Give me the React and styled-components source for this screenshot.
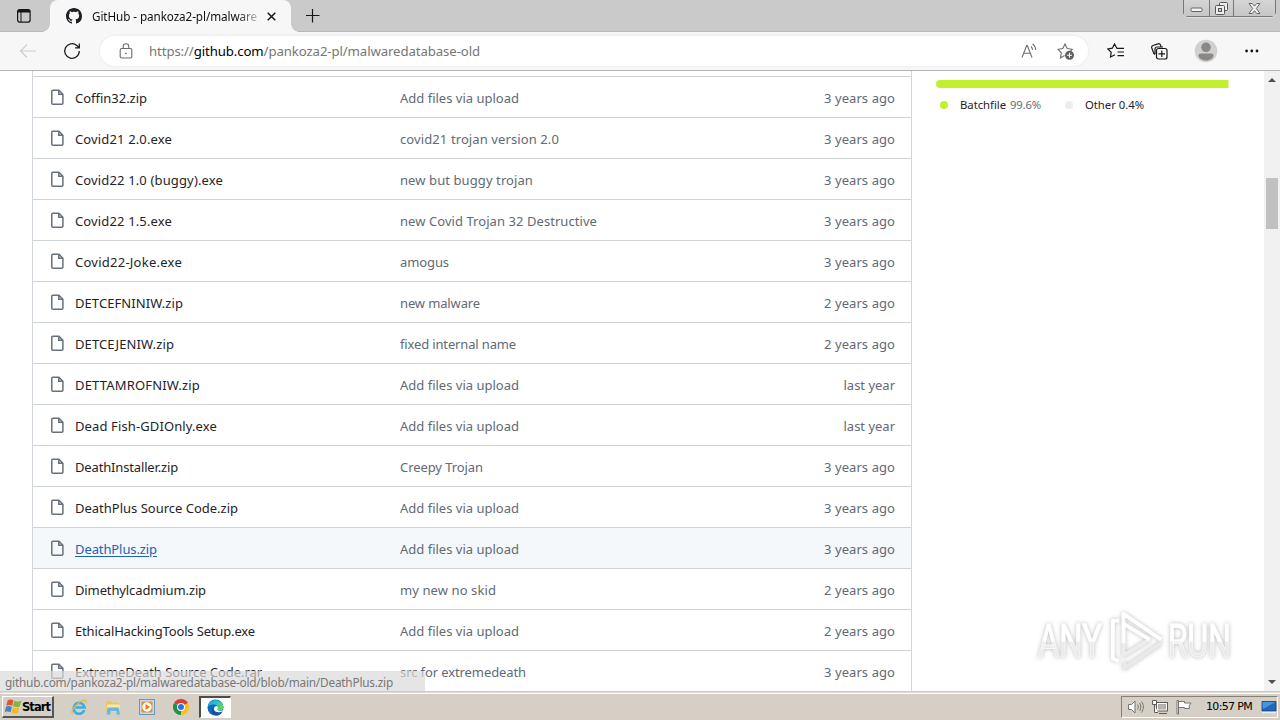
import React, { useLayoutEffect, useRef, useState } from 'react';
import styled, { createGlobalStyle } from 'styled-components';

const GlobalStyle = createGlobalStyle`
  * { box-sizing: border-box; }
  body {
    margin: 0;
    overflow: hidden;
    background: #fff;
    font-family: "Noto Sans", "Open Sans", sans-serif;
  }
  svg { display: block; flex: none; }
`;

const Screen = styled.div`
  position: relative;
  display: flex;
  flex-direction: column;
  width: 1280px;
  height: 720px;
  overflow: hidden;
`;

/* ---------- text ---------- */

const FitBox = styled.span`
  display: block;
  flex: none;
  width: ${p => p.$w}px;
  white-space: pre;
`;
const FitInner = styled.span`
  display: inline-block;
  text-decoration: inherit;
`;

// spreads the letters so that the string takes exactly w pixels
const Fit = ({ w, children, className }) => {
  const ref = useRef(null);
  const [spacing, setSpacing] = useState(0);
  useLayoutEffect(() => {
    const natural = ref.current.getBoundingClientRect().width;
    setSpacing((w - natural) / ref.current.textContent.length);
  }, []);
  return (
    <FitBox $w={w} className={className}>
      <FitInner ref={ref} style={{ letterSpacing: spacing }}>{children}</FitInner>
    </FitBox>
  );
};

/* ---------- browser chrome ---------- */

const TabStrip = styled.div`
  display: flex;
  flex: none;
  height: 32px;
  background: #cacaca;
  box-shadow: inset 0 -1px 0 #b9b9b9;
`;
const TabActions = styled.div`
  width: 50px;
  padding: 8px 0 0 16px;
`;
const Tab = styled.div`
  position: relative;
  display: flex;
  align-items: center;
  width: 241px;
  height: 32px;
  padding-left: 16px;
  border-radius: 8px 8px 0 0;
  background: #f7f7f7;
  &::before, &::after {
    content: '';
    position: absolute;
    bottom: 0;
    width: 8px;
    height: 8px;
  }
  &::before {
    left: -8px;
    background: radial-gradient(circle at 0 0, transparent 7.5px, #f7f7f7 8px);
  }
  &::after {
    right: -8px;
    background: radial-gradient(circle at 100% 0, transparent 7.5px, #f7f7f7 8px);
  }
`;
const TabTitle = styled(Fit)`
  margin: 0 10px 0 10px;
  font-size: 11.7px;
  line-height: 18px;
  color: #111;
  mask-image: linear-gradient(90deg, #000 145px, rgba(0, 0, 0, .3) 164px);
`;
const NewTab = styled.div`
  padding: 9px 0 0 15px;
`;
const WindowButtons = styled.div`
  display: flex;
  width: 93px;
  height: 17px;
  margin: 0 4px 0 auto;
  border: 1px solid #777;
  border-top: 0;
  border-radius: 0 0 5px 5px;
  box-shadow: 0 1px 0 #dedede;
`;
const WindowButton = styled.div`
  display: flex;
  align-items: center;
  justify-content: center;
  width: ${p => p.$w}px;
  background: linear-gradient(#d5d5d5, #c6c6c6);
  & + & { border-left: 1px solid #777; }
`;

const Toolbar = styled.div`
  display: flex;
  flex: none;
  align-items: center;
  height: 39px;
  padding-left: 19px;
  background: #f7f7f7;
  border-bottom: 1px solid #b4b4b4;
`;
const Reload = styled.div`
  margin-left: 26px;
`;
const AddressBar = styled.div`
  display: flex;
  align-items: center;
  width: 988px;
  height: 30px;
  margin-left: 19px;
  padding: 0 13px 0 18px;
  border-radius: 15px;
  background: #fff;
  box-shadow: 0 0 0 1.5px #f1f1f1;
`;
const Url = styled(Fit)`
  margin: 0 auto 0 15px;
  font-size: 13.2px;
  color: #767676;
  b { font-weight: 400; color: #000; }
`;
const ToolIcons = styled.div`
  display: flex;
  align-items: center;
  padding-left: 19px;
`;
const IconSlot = styled.div`
  width: ${p => p.$w}px;
`;
const Avatar = styled.div`
  margin-right: 27px;
`;

/* ---------- page ---------- */

const Page = styled.main`
  position: relative;
  display: flex;
  flex: none;
  height: 620px;
  overflow: hidden;
  background: #fff;
`;
const FileTable = styled.div`
  width: 880px;
  margin-left: 32px;
  padding-top: 5px;
  border: solid #d0d5da;
  border-width: 0 1px;
`;
const FileRow = styled.div`
  display: flex;
  align-items: center;
  height: 41px;
  padding: 1px 16px 0 16px;
  border-top: 1px solid #d0d3d6;
  background: ${p => (p.$hover ? '#f5f8fb' : '#fff')};
  font-size: 13px;
  line-height: 20px;
`;
const FileIcon = styled.svg`
  margin: -1px 9px 0 0;
`;
const NameCell = styled.div`
  width: 325px;
  color: ${p => (p.$hover ? '#1b62b5' : '#1f2328')};
  span { text-decoration: ${p => (p.$hover ? 'underline' : 'none')}; }
  text-underline-offset: 2px;
`;
const MessageCell = styled.div`
  flex: 1;
  color: #626a74;
`;
const AgeCell = styled.div`
  color: #626a74;
`;
const Sidebar = styled.aside`
  width: 293px;
  margin-left: 24px;
  padding-top: 9px;
`;
const LanguageBar = styled.div`
  height: 8px;
  border-radius: 4px 0 0 4px;
  background: #c1f12e;
  border-right: 1px solid #dff5a4;
`;
const Languages = styled.div`
  display: flex;
  align-items: center;
  margin-top: 8px;
  padding-left: 4px;
  font-size: 11.3px;
  line-height: 18px;
  color: #1f2328;
`;
const Dot = styled.i`
  width: 8px;
  height: 8px;
  margin-right: 12px;
  border-radius: 50%;
  background: ${p => p.$color};
`;
const Percent = styled(Fit)`
  margin: 0 24px 0 4px;
  color: #656d76;
`;
const Scrollbar = styled.div`
  display: flex;
  flex-direction: column;
  align-items: center;
  width: 16px;
  margin-left: auto;
  padding: 7px 0;
  background: #f1f1f1;
`;
const Thumb = styled.div`
  width: 12px;
  height: 51px;
  margin: 96px 0 auto;
  background: #c1c1c1;
`;
const StatusBubble = styled.div`
  position: absolute;
  left: 0;
  bottom: 0;
  width: 425px;
  height: 20px;
  padding: 2px 0 0 5px;
  border-radius: 0 3px 0 0;
  background: rgba(218, 218, 218, .7);
  font-size: 11.8px;
  line-height: 18px;
  color: #777;
`;
const Watermark = styled.div`
  position: absolute;
  left: 1038px;
  top: 537px;
  display: flex;
  align-items: center;
  width: 200px;
  height: 66px;
  filter: drop-shadow(0 0 2px rgba(0, 0, 0, .27));
`;
const MarkWord = styled.span`
  width: ${p => p.$w}px;
  white-space: nowrap;
  font: 400 46px/66px Roboto, sans-serif;
  span {
    display: inline-block;
    transform: scaleX(${p => p.$scale});
    transform-origin: 0 50%;
    color: transparent;
    -webkit-text-stroke: 1px rgba(255, 255, 255, .6);
    background: linear-gradient(#fff 50%, #ececec 52%, #e6e6e6);
    background-clip: text;
  }
`;

/* ---------- taskbar ---------- */

const Taskbar = styled.footer`
  display: flex;
  flex: none;
  align-items: flex-start;
  height: 29px;
  padding: 4px 2px 0;
  background: #d5cfc6;
  border-top: 1px solid #cfcac3;
  box-shadow: inset 0 1px 0 #dedad4, inset 0 2px 0 #fdfdfc;
`;
const StartButton = styled.div`
  display: flex;
  align-items: center;
  width: 52px;
  height: 22px;
  padding-left: 2px;
  border: solid;
  border-width: 1px 2px 2px 1px;
  border-color: #fff #555 #555 #fff;
  font: 700 11.5px "DejaVu Sans", sans-serif;
  color: #000;
`;
const StartLabel = styled(Fit)`
  margin-left: 0;
`;
const QuickLaunch = styled.div`
  display: flex;
  align-items: center;
  gap: 18px;
  height: 22px;
  padding: 0 10px 0 17px;
`;
const ActiveTask = styled.div`
  display: flex;
  align-items: center;
  justify-content: center;
  width: 32px;
  height: 22px;
  border: solid;
  border-width: 2px 1px 1px 2px;
  border-color: #4c4c4c #fff #fff #4c4c4c;
  background: #fdfdfc;
`;
const Tray = styled.div`
  display: flex;
  align-items: center;
  width: 157px;
  height: 22px;
  margin-left: auto;
  padding-left: 6px;
  border: 1px solid;
  border-color: #878078 #fff #fff #878078;
`;
const TraySlot = styled.div`
  width: ${p => p.$w}px;
`;
const Clock = styled(Fit)`
  margin: 0 9px 0 5px;
  font: 11px/14px "DejaVu Sans", sans-serif;
  color: #000;
`;

/* ---------- data ---------- */

const upload = ['Add files via upload', 119];
const years3 = ['3 years ago', 71];
const years2 = ['2 years ago', 71];
const lastYear = ['last year', 51.5];

const files = [
  { name: ['Coffin32.zip', 72], message: upload, age: years3 },
  { name: ['Covid21 2.0.exe', 97], message: ['covid21 trojan version 2.0', 159], age: years3 },
  { name: ['Covid22 1.0 (buggy).exe', 148], message: ['new but buggy trojan', 133], age: years3 },
  { name: ['Covid22 1.5.exe', 97], message: ['new Covid Trojan 32 Destructive', 197], age: years3 },
  { name: ['Covid22-Joke.exe', 107], message: ['amogus', 49], age: years3 },
  { name: ['DETCEFNINIW.zip', 108], message: ['new malware', 80], age: years2 },
  { name: ['DETCEJENIW.zip', 99], message: ['fixed internal name', 116], age: years2 },
  { name: ['DETTAMROFNIW.zip', 125], message: upload, age: lastYear },
  { name: ['Dead Fish-GDIOnly.exe', 142], message: upload, age: lastYear },
  { name: ['DeathInstaller.zip', 103], message: ['Creepy Trojan', 83], age: years3 },
  { name: ['DeathPlus Source Code.zip', 163], message: upload, age: years3 },
  { name: ['DeathPlus.zip', 82], message: upload, age: years3, hover: true },
  { name: ['Dimethylcadmium.zip', 131], message: ['my new no skid', 96], age: years2 },
  { name: ['EthicalHackingTools Setup.exe', 180], message: upload, age: years2 },
  { name: ['ExtremeDeath Source Code.rar', 187], message: ['src for extremedeath', 126], age: years3 },
];

/* ---------- icons ---------- */

const GithubMark = () => (
  <svg width="16" height="16" viewBox="0 0 16 16" fill="#1b1f23">
    <path d="M8 0C3.58 0 0 3.58 0 8c0 3.54 2.29 6.53 5.47 7.59.4.07.55-.17.55-.38 0-.19-.01-.82-.01-1.49-2.01.37-2.53-.49-2.69-.94-.09-.23-.48-.94-.82-1.13-.28-.15-.68-.52-.01-.53.63-.01 1.08.58 1.23.82.72 1.21 1.87.87 2.33.66.07-.52.28-.87.51-1.07-1.78-.2-3.64-.89-3.64-3.95 0-.87.31-1.59.82-2.15-.08-.2-.36-1.02.08-2.12 0 0 .67-.21 2.2.82.64-.18 1.32-.27 2-.27s1.36.09 2 .27c1.53-1.04 2.2-.82 2.2-.82.44 1.1.16 1.92.08 2.12.51.56.82 1.27.82 2.15 0 3.07-1.87 3.75-3.65 3.95.29.25.54.73.54 1.48 0 1.07-.01 1.93-.01 2.2 0 .21.15.46.55.38A8.01 8.01 0 0 0 16 8c0-4.42-3.58-8-8-8z" />
  </svg>
);

const DocIcon = () => (
  <FileIcon width="17" height="17" viewBox="0 0 17 17" fill="none" stroke="#68717b" strokeWidth="1.5">
    <path d="M3.8 1.2h6.1l4 4v9.1a1 1 0 0 1-1 1H3.8a1 1 0 0 1-1-1V2.2a1 1 0 0 1 1-1zM9.8 1.4v3.9h4" />
  </FileIcon>
);

const ChromeIcon = () => (
  <svg width="16" height="16" viewBox="0 0 16 16">
    <path d="M8 8 1.07 4A8 8 0 0 1 14.93 4z" fill="#e33b2e" />
    <path d="M8 8 14.93 4A8 8 0 0 1 8 16z" fill="#fbc116" />
    <path d="M8 8v8A8 8 0 0 1 1.07 4z" fill="#229342" />
    <circle cx="8" cy="8" r="4" fill="#fff" />
    <circle cx="8" cy="8" r="3" fill="#2c75e0" />
  </svg>
);

const EdgeIcon = () => (
  <svg width="17" height="17" viewBox="0 0 17 17">
    <defs>
      <linearGradient id="edgeTop" x1="0" y1="0" x2="1" y2=".4">
        <stop offset="0" stopColor="#1fa5df" />
        <stop offset=".55" stopColor="#27bfce" />
        <stop offset="1" stopColor="#62d35a" />
      </linearGradient>
    </defs>
    <circle cx="8.5" cy="8.5" r="8" fill="#1168bd" />
    <path d="M.6 8A8 8 0 0 1 16.5 8c0 2.5-2 3.8-4.3 3.8-1.8 0-2.7-.8-2-1.6 1.2-1.6.2-4.6-3-4.6C3.6 5.6.8 7 .6 8z" fill="url(#edgeTop)" />
    <path d="M5.8 9.2C5.8 13 9 15 15.3 12.9 14 15.3 11.5 16.5 8.8 16.5 5 15.5 3.5 12.5 5.8 9.2z" fill="#14509b" />
    <path d="M8.3 7.4c-1.6.7-1.9 3.6.4 5 2.3 1.3 5 .9 6.9-.2l1.4.6V10.5c-2 1.7-4.6 1.7-6.3.8-.8-.5-.4-1 .1-1.9.5-1.5-.9-2.9-2.5-2z" fill="#fff" />
  </svg>
);

const Word = ({ w, scale, children }) => (
  <MarkWord $w={w} $scale={scale}><span>{children}</span></MarkWord>
);

export default function App() {
  return (
    <Screen>
      <GlobalStyle />
      <TabStrip>
        <TabActions>
          <svg width="16" height="16" viewBox="0 0 16 16" fill="none" stroke="#171717">
            <rect x="1.6" y="1.6" width="12.5" height="12.5" rx="2" strokeWidth="1.2" />
            <path d="M2 3.2h12" strokeWidth="2.6" />
            <path d="M5 4v10" />
          </svg>
        </TabActions>
        <Tab>
          <GithubMark />
          <TabTitle w={165}>GitHub - pankoza2-pl/malware</TabTitle>
          <svg width="9" height="9" viewBox="0 0 9 9" stroke="#171717" strokeWidth="1.5">
            <path d="M.7.7l7.6 7.6M8.3.7.7 8.3" />
          </svg>
        </Tab>
        <NewTab>
          <svg width="14" height="14" viewBox="0 0 14 14" stroke="#171717" strokeWidth="1.2">
            <path d="M6.5 0v13.5M0 6.5h13.5" />
          </svg>
        </NewTab>
        <WindowButtons>
          <WindowButton $w={25}>
            <svg width="13" height="7" viewBox="0 0 13 7"><rect x="1" y="3" width="11" height="3.5" rx="1" fill="#f4f4f4" stroke="#666" /></svg>
          </WindowButton>
          <WindowButton $w={25}>
            <svg width="13" height="13" viewBox="0 0 13 13" fill="#eee" stroke="#555">
              <rect x="4.5" y=".5" width="8" height="8" rx="1" />
              <rect x=".5" y="3.5" width="9" height="9" rx="1" />
              <rect x="3.5" y="6.5" width="3" height="3" fill="#ccc" />
            </svg>
          </WindowButton>
          <WindowButton $w={42}>
            <svg width="13" height="11" viewBox="0 0 13 11" fill="#f4f4f4" stroke="#666">
              <path d="M1 .5h3.2l2.3 2.7L8.8.5H12L8.3 5.5l3.7 5H8.8L6.5 7.7l-2.3 2.8H1l3.7-5z" />
            </svg>
          </WindowButton>
        </WindowButtons>
      </TabStrip>

      <Toolbar>
        <svg width="18" height="16" viewBox="0 0 18 16" fill="none" stroke="#cfcfcf" strokeWidth="1.2">
          <path d="M17 8H2M8 1.5 1.5 8 8 14.5" />
        </svg>
        <Reload>
          <svg width="18" height="18" viewBox="0 0 18 18" fill="none" stroke="#202020" strokeWidth="1.3">
            <path d="M16.3 9A7.3 7.3 0 1 1 13.8 3.5L16 5.4M16.3 1.5v4.3H12" />
          </svg>
        </Reload>
        <AddressBar>
          <svg width="16" height="16" viewBox="0 0 16 16" fill="none" stroke="#6c6c6c" strokeWidth="1.1">
            <rect x="2.2" y="5.5" width="11.6" height="9.5" rx="1.5" />
            <path d="M5.2 5.5V3.6a2.8 2.8 0 0 1 5.6 0v1.9" />
            <circle cx="8" cy="10.3" r=".9" fill="#6c6c6c" stroke="none" />
          </svg>
          <Url w={331}>https://<b>github.com</b>/pankoza2-pl/malwaredatabase-old</Url>
          <IconSlot $w={36}>
            <svg width="17" height="16" viewBox="0 0 17 16" fill="none" stroke="#6c6c6c" strokeWidth="1.1">
              <path d="M1 14.5 5.7 2.5h.6L11 14.5M2.7 10.3h6.6M10 3.5c1 .8 1.5 2 1.5 3.500M11.6 1c2 1.3 3 3.3 3 6" />
            </svg>
          </IconSlot>
          <svg width="18" height="17" viewBox="0 0 18 17" fill="none" stroke="#6c6c6c" strokeWidth="1.1">
            <path d="M7.5 12.5 3.5 15l.8-5.2L1 6.3l4.8-.8L8 1l2.2 4.500 5 .8-2 2" />
            <circle cx="12.5" cy="12.3" r="4.5" fill="#5f5f5f" stroke="none" />
            <path d="M12.5 9.8v5M10 12.3h5" stroke="#fff" />
          </svg>
        </AddressBar>
        <ToolIcons>
          <IconSlot $w={44}>
            <svg width="18" height="16" viewBox="0 0 18 16" fill="none" stroke="#171717" strokeWidth="1.2">
              <path d="M10 5.4 9.8 5 7.5 1 5.3 5.2.9 6l3.3 3.4L3.5 14l4.5-2.3M9.8 5.4H17M10.5 9H17M10.5 12.6H17" />
            </svg>
          </IconSlot>
          <IconSlot $w={43}>
            <svg width="17" height="17" viewBox="0 0 17 17" fill="none" stroke="#171717" strokeWidth="1.2">
              <path d="M4 11.5 2.8 10.5.8 5A2 2 0 0 1 2 2.5L7 .9a2 2 0 0 1 2.5 1l.5 1.6M4 11V6a2 2 0 0 1 2-2h6" />
              <rect x="5.5" y="5.5" width="10.5" height="10.5" rx="2" />
              <path d="M10.8 7.5v6.5M7.5 10.8H14" />
            </svg>
          </IconSlot>
          <Avatar>
            <svg width="24" height="24" viewBox="0 0 24 24">
              <circle cx="12" cy="12" r="11.3" fill="#d2d0ce" />
              <circle cx="12" cy="8.3" r="4.8" fill="#8a8886" />
              <path d="M4.5 16.5c0-1.3 1-2 2.3-2h10.4c1.3 0 2.3.7 2.3 2 0 2.5-3.3 5-7.5 5s-7.5-2.5-7.5-5z" fill="#8a8886" />
            </svg>
          </Avatar>
          <svg width="14" height="4" viewBox="0 0 14 4" fill="#171717">
            <circle cx="1.6" cy="2" r="1.4" /><circle cx="6.8" cy="2" r="1.4" /><circle cx="12" cy="2" r="1.4" />
          </svg>
        </ToolIcons>
      </Toolbar>

      <Page>
        <FileTable>
          {files.map(f => (
            <FileRow key={f.name[0]} $hover={f.hover}>
              <DocIcon />
              <NameCell $hover={f.hover}><Fit w={f.name[1]}>{f.name[0]}</Fit></NameCell>
              <MessageCell><Fit w={f.message[1]}>{f.message[0]}</Fit></MessageCell>
              <AgeCell><Fit w={f.age[1]}>{f.age[0]}</Fit></AgeCell>
            </FileRow>
          ))}
        </FileTable>
        <Sidebar>
          <LanguageBar />
          <Languages>
            <Dot $color="#c1f12e" />
            <Fit w={46}>Batchfile</Fit>
            <Percent w={31}>99.6%</Percent>
            <Dot $color="#ededed" />
            <Fit w={59}>Other 0.4%</Fit>
          </Languages>
        </Sidebar>
        <Scrollbar>
          <svg width="8" height="4" viewBox="0 0 8 4" fill="#505050"><path d="M0 4 4 0l4 4z" /></svg>
          <Thumb />
          <svg width="8" height="4" viewBox="0 0 8 4" fill="#505050"><path d="M0 0l4 4 4-4z" /></svg>
        </Scrollbar>
        <StatusBubble>
          <Fit w={388}>github.com/pankoza2-pl/malwaredatabase-old/blob/main/DeathPlus.zip</Fit>
        </StatusBubble>
        <Watermark>
          <Word w={71} scale={0.71}>ANY</Word>
          <svg width="59" height="64" viewBox="0 0 61 64" fill="none" strokeLinejoin="round">
            <path d="M10.5 11H4v39l6 3" stroke="#fff" strokeWidth="4" />
            <path d="M54 34 16 60v-6" stroke="#e9e9e9" strokeWidth="4" />
            <path d="M15 30v17l27-16.500" stroke="#ececec" strokeWidth="4" />
            <path d="M15 34V4l39 26.500M15 14l27 16.500" stroke="#fff" strokeWidth="4" />
          </svg>
          <Word w={66} scale={0.69}>RUN</Word>
        </Watermark>
      </Page>

      <Taskbar>
        <StartButton>
          <svg width="17" height="17" viewBox="0 0 16 16">
            <path d="M2.5 2c2-1 3.5-.8 5.5.2L6.8 7.400c-2-1-3.500-1-5.500-.2z" fill="#e2562b" />
            <path d="M8.8 2.700c2 1 4 .9 6.500 0L13.800 7.900c-2 .9-4 .9-6.200-.1z" fill="#7db544" />
            <path d="M1 8.200c2-.9 3.500-.8 5.500.2l-1.300 5c-2-1-3.500-1-5.500-.2z" fill="#4286c8" />
            <path d="M7.400 8.900c2 1 4 .9 6 0l-1.300 5c-2 .9-4 .9-6-.1z" fill="#f2b927" />
          </svg>
          <StartLabel w={28}>Start</StartLabel>
        </StartButton>
        <QuickLaunch>
          <svg width="16" height="16" viewBox="0 0 16 16" fill="none">
            <path d="M13.3 11.3A5.5 5.5 0 1 1 13.6 8.500H4.500" stroke="#3eade3" strokeWidth="2.700" />
            <path d="M1.5 14.500C-.5 12 5 5 10.500 2c3-1.600 5.200-1.200 4 1.700" stroke="#e9b834" strokeWidth="1.300" />
          </svg>
          <svg width="16" height="16" viewBox="0 0 16 16">
            <path d="M1 2h5l1 1.500h7V13H1z" fill="#e9c768" />
            <path d="M2 5.500h13l-1 7H2z" fill="#f9e7a4" />
            <path d="M2.500 8.500h11l1.500 7h-3.500v-3.500h-6v3.500H1.500z" fill="#69b8dc" />
          </svg>
          <svg width="16" height="16" viewBox="0 0 16 16">
            <rect x=".5" y=".5" width="15" height="15" fill="#bfdcf0" stroke="#5b9ccc" />
            <rect x="2.500" y="2.500" width="11" height="11" fill="#f58a1f" />
            <circle cx="8" cy="8" r="4.700" fill="#fff" />
            <path d="M6.500 5v6l4.500-3z" fill="#ee7811" />
          </svg>
          <ChromeIcon />
        </QuickLaunch>
        <ActiveTask><EdgeIcon /></ActiveTask>
        <Tray>
          <TraySlot $w={24}>
            <svg width="17" height="16" viewBox="0 0 17 16" fill="none" stroke="#77736e">
              <path d="M.5 5.500h3L7 2v12L3.500 10.500h-3z" fill="#fff" />
              <path d="M9.500 5.500c1 1.500 1 3.500 0 5M11.500 4c1.800 2.500 1.800 5.500 0 8M13.500 2.500c2.500 3.500 2.500 7.500 0 11" />
            </svg>
          </TraySlot>
          <TraySlot $w={24}>
            <svg width="16" height="16" viewBox="0 0 16 16" fill="#fff" stroke="#5f5b57">
              <rect x="4.500" y="3.500" width="11" height="8.500" />
              <rect x="6.500" y="5.500" width="7" height="4.500" fill="#bbb5ad" stroke="#aaa" />
              <path d="M7 14.500h8M.5 1.500h4v4h-4zM2.500 5.500v8H6" />
            </svg>
          </TraySlot>
          <TraySlot $w={25}>
            <svg width="16" height="16" viewBox="0 0 16 16" fill="#fff" stroke="#77736e">
              <path d="M1 1.500h1.500v13.500H1zM2.500 2.500h6V4h6.500l-2 3 .5 2.500h-5V8.500h-6z" />
            </svg>
          </TraySlot>
          <Clock w={46}>10:57 PM</Clock>
          <svg width="16" height="14" viewBox="0 0 16 14">
            <path d="M1 1.500h14V11H1z" fill="#2267b8" stroke="#173c74" strokeWidth=".8" />
            <path d="M1.500 2h13L3 8.500H1.500z" fill="#4b94dc" />
            <path d="M1 12.500h14" stroke="#e8eef5" strokeWidth="1.500" />
          </svg>
        </Tray>
      </Taskbar>
    </Screen>
  );
}
